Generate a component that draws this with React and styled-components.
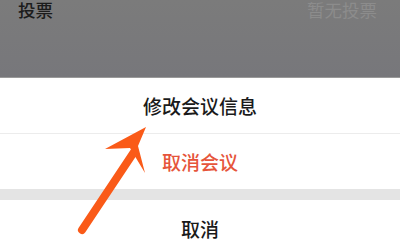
import React from "react";
import styled, { createGlobalStyle } from "styled-components";

const Global = createGlobalStyle`
  html, body { margin: 0; padding: 0; background: #ffffff; }
  body { font-family: "Noto Sans CJK SC", "Noto Sans", sans-serif; }
`;

const Page = styled.div`
  position: relative;
  width: 400px;
  height: 242px;
  overflow: hidden;
  display: flex;
  flex-direction: column;
  background: #ffffff;
`;

const Backdrop = styled.div`
  flex-shrink: 0;
  height: 78px;
  background: linear-gradient(#7b7b7b, #77777b);
  border-bottom: 1px solid #9a9a9a;
  box-sizing: border-box;
`;

const BgRow = styled.div`
  display: flex;
  justify-content: space-between;
  align-items: flex-start;
  padding: 1px 23px 0 18px;
  font-size: 17.5px;
  line-height: 17px;
  font-weight: 500;
`;

const BgLabel = styled.span`
  color: #1c1c1c;
`;

const BgValue = styled.span`
  color: #8c8c8c;
  font-weight: 400;
`;

const Sheet = styled.div`
  flex-shrink: 0;
  display: flex;
  flex-direction: column;
`;

const Option = styled.div`
  flex-shrink: 0;
  height: ${(p) => p.$h}px;
  display: flex;
  align-items: center;
  justify-content: center;
  font-size: 19px;
  font-weight: 500;
  color: ${(p) => (p.$danger ? "#e6553b" : "#1a1a1a")};
  background: #ffffff;
  border-bottom: ${(p) => (p.$divider ? "1px solid #ececec" : "none")};
  box-sizing: border-box;
`;

const Gap = styled.div`
  flex-shrink: 0;
  height: 11px;
  background: #e4e4e4;
`;

const ArrowLayer = styled.svg`
  position: absolute;
  left: 0;
  top: 0;
  pointer-events: none;
`;

export default function App() {
  return (
    <>
      <Global />
      <Page>
        <Backdrop>
          <BgRow>
            <BgLabel>投票</BgLabel>
            <BgValue>暂无投票</BgValue>
          </BgRow>
        </Backdrop>
        <Sheet>
          <Option $h={56} $divider>修改会议信息</Option>
          <Option $h={55} $danger>取消会议</Option>
          <Gap />
          <Option $h={57}>取消</Option>
        </Sheet>
        <ArrowLayer width="400" height="242" viewBox="0 0 400 242">
          <line x1="82" y1="230" x2="134" y2="152" stroke="#fa5a18" strokeWidth="8" strokeLinecap="round" />
          <polygon points="146,127 105,149 130,148 145,173 138,146" fill="#fa5a18" />
        </ArrowLayer>
      </Page>
    </>
  );
}
